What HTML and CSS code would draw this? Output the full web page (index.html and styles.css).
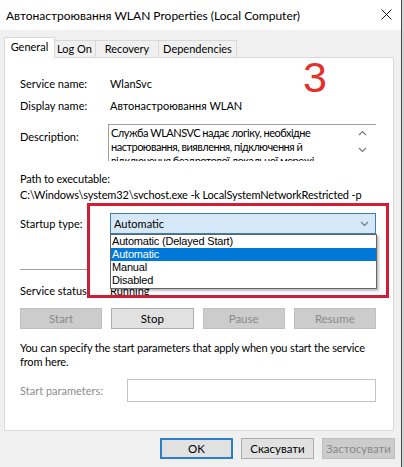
FILE: index.html
```html
<!DOCTYPE html>
<html>
<head>
<meta charset="utf-8">
<link rel="stylesheet" href="styles.css">
</head>
<body>
<div class="window">
  <div class="titlebar">
    <span class="title">Автонастроювання WLAN Properties (Local Computer)</span>
    <svg class="close" width="11" height="11" viewBox="0 0 11 11"><path d="M0.5 0.5L10.5 10.5M10.5 0.5L0.5 10.5" stroke="#1a1a1a" stroke-width="1"/></svg>
  </div>
  <div class="client">
    <div class="tabs">
      <div class="tab tab-active tab-general">General</div>
      <div class="tab tab-logon">Log On</div>
      <div class="tab tab-recovery">Recovery</div>
      <div class="tab tab-deps">Dependencies</div>
    </div>
    <div class="panel">
      <div class="row"><span class="label">Service name:</span><span>WlanSvc</span></div>
      <div class="row row-display"><span class="label">Display name:</span><span>Автонастроювання WLAN</span></div>
      <div class="desc-row">
        <span class="label label-desc">Description:</span>
        <div class="desc-box">
          <div class="desc-text">Служба WLANSVC надає логіку, необхідне настроювання, виявлення, підключення й відключення бездротової локальної мережі</div>
          <div class="desc-scroll">
            <svg width="9" height="6" viewBox="0 0 9 6"><path d="M1 5L4.5 1.5L8 5" fill="none" stroke="#7a7a7a" stroke-width="1.2"/></svg>
            <svg width="9" height="6" viewBox="0 0 9 6"><path d="M1 1L4.5 4.5L8 1" fill="none" stroke="#7a7a7a" stroke-width="1.2"/></svg>
          </div>
        </div>
      </div>
      <div class="path">
        <div>Path to executable:</div>
        <div>C:\Windows\system32\svchost.exe -k LocalSystemNetworkRestricted -p</div>
      </div>
      <div class="row row-startup">
        <span class="label">Startup type:</span>
        <div class="combo">
          <span>Automatic</span>
          <svg width="9" height="6" viewBox="0 0 9 6"><path d="M1 1L4.5 4.5L8 1" fill="none" stroke="#6b7c8c" stroke-width="1.2"/></svg>
        </div>
      </div>
      <div class="separator"></div>
      <div class="row row-status"><span class="label">Service status:</span><span>Running</span></div>
      <div class="svc-buttons">
        <button class="btn btn-disabled">Start</button>
        <button class="btn">Stop</button>
        <button class="btn btn-disabled">Pause</button>
        <button class="btn btn-disabled">Resume</button>
      </div>
      <p class="help">You can specify the start parameters that apply when you start the service from here.</p>
      <div class="row row-params">
        <span class="label label-params">Start parameters:</span>
        <div class="params-input"></div>
      </div>

      <ul class="dropdown">
        <li>Automatic (Delayed Start)</li>
        <li class="selected">Automatic</li>
        <li>Manual</li>
        <li>Disabled</li>
      </ul>
      <div class="annot-box"></div>
      <div class="annot-num">3</div>
    </div>
    <div class="footer">
      <button class="btn btn-default">OK</button>
      <button class="btn">Скасувати</button>
      <button class="btn btn-disabled">Застосувати</button>
    </div>
  </div>
</div>
</body>
</html>
```

FILE: styles.css
```css
* { box-sizing: border-box; }
html, body { margin: 0; padding: 0; }
body {
  width: 404px;
  height: 467px;
  overflow: hidden;
  background: #d6d6d6;
  font-family: Lato, "Liberation Sans", sans-serif;
  font-size: 11px;
  color: #000;
}
.window {
  width: 402px;
  height: 467px;
  background: #f0f0f0;
  border-right: 1px solid #4a4a4a;
  display: flex;
  flex-direction: column;
}
.titlebar {
  height: 30px;
  flex: none;
  background: #fff;
  display: flex;
  align-items: center;
  padding: 0 9px 0 6px;
  font-size: 12px;
}
.title { flex: 1; }
.close { flex: none; margin-top: -1px; }

.client { padding: 7px 7px 0 4px; }
.tabs {
  display: flex;
  align-items: flex-end;
  height: 20px;
  position: relative;
  z-index: 1;
}
.tab {
  height: 17px;
  line-height: 16px;
  margin-left: -1px;
  border: 1px solid #d9d9d9;
  border-bottom: none;
  background: #f0f0f0;
  text-align: center;
}
.tab-general { width: 51px; }
.tab-logon { width: 43px; }
.tab-recovery { width: 64px; }
.tab-deps { width: 79px; }
.tab-active {
  height: 21px;
  margin-left: 0;
  margin-right: -1px;
  margin-bottom: -1px;
  padding-top: 1px;
  background: #fff;
  position: relative;
  z-index: 2;
}
.panel {
  position: relative;
  width: 390px;
  height: 374px;
  background: #fff;
  border: 1px solid #d9d9d9;
  padding: 18px 16px 0 15px;
}
.row {
  display: flex;
  align-items: center;
  height: 14px;
}
.label { width: 90px; flex: none; }
.row-display { margin-top: 8px; }

.desc-row { display: flex; margin-top: 12px; }
.label-desc { width: 88px; padding-top: 6px; line-height: 14px; }
.desc-box {
  width: 268px;
  height: 37px;
  border-top: 1px solid #a0a0a0;
  border-left: 1px solid #a0a0a0;
  display: flex;
  overflow: hidden;
}
.desc-text {
  flex: 1;
  padding: 1px 0 0 2px;
  font-size: 11px;
  letter-spacing: -0.5px;
  line-height: 14px;
}
.desc-scroll {
  width: 24px;
  flex: none;
  display: flex;
  flex-direction: column;
  align-items: center;
  gap: 11px;
  padding: 5px 4px 0 0;
}
.path { margin-top: 10px; line-height: 16px; letter-spacing: -0.15px; }
.row-startup { margin-top: 10px; height: 21px; }
.combo {
  width: 266px;
  height: 21px;
  border: 1px solid #3c7fb1;
  background: #d6e8f8;
  display: flex;
  align-items: center;
  justify-content: space-between;
  padding: 0 6px 0 3px;
}
.separator {
  margin-top: 35px;
  width: 70px;
  height: 1px;
  background: #a0a0a0;
}
.row-status { margin-top: 13px; }
.svc-buttons {
  margin-top: 11px;
  width: 356px;
  display: grid;
  grid-template-columns: repeat(4, 1fr);
  gap: 9px;
}
.btn {
  height: 21px;
  font-family: inherit;
  font-size: 11.5px;
  color: #000;
  background: #e1e1e1;
  border: 1px solid #adadad;
  padding: 0;
}
.btn-disabled {
  background: #cccccc;
  border-color: #bfbfbf;
  color: #8a8a8a;
}
.help {
  margin: 12px 0 0;
  line-height: 14px;
  font-size: 11px;
  letter-spacing: -0.15px;
}
.row-params { margin-top: 10px; height: 23px; }
.label-params { width: 107px; color: #8c8c8c; }
.params-input {
  width: 249px;
  height: 23px;
  border: 1px solid #c4c4c4;
  background: #fff;
}

.dropdown {
  position: absolute;
  left: 105px;
  top: 176px;
  width: 267px;
  height: 55px;
  margin: 0;
  padding: 0;
  list-style: none;
  background: #fff;
  border: 1px solid #646464;
  box-shadow: 2px 2px 2px rgba(0,0,0,0.25);
  font-family: "Liberation Sans", sans-serif;
  font-size: 11px;
  letter-spacing: -0.2px;
}
.dropdown li {
  height: 13px;
  line-height: 13px;
  padding-left: 1px;
}
.dropdown .selected { background: #0078d7; color: #fff; }

.annot-box {
  position: absolute;
  left: 82px;
  top: 145px;
  width: 302px;
  height: 95px;
  border: 3px solid #cf1d36;
}
.annot-num {
  position: absolute;
  left: 298px;
  top: -2px;
  font-family: "Liberation Sans", sans-serif;
  font-size: 43px;
  line-height: 43px;
  color: #e4302c;
}

.footer {
  display: flex;
  justify-content: flex-end;
  gap: 8px;
  padding-top: 7px;
  margin-right: -1px;
}
.footer .btn { width: 73px; }
.btn-default { border: 2px solid #2a7fc9; }
```
